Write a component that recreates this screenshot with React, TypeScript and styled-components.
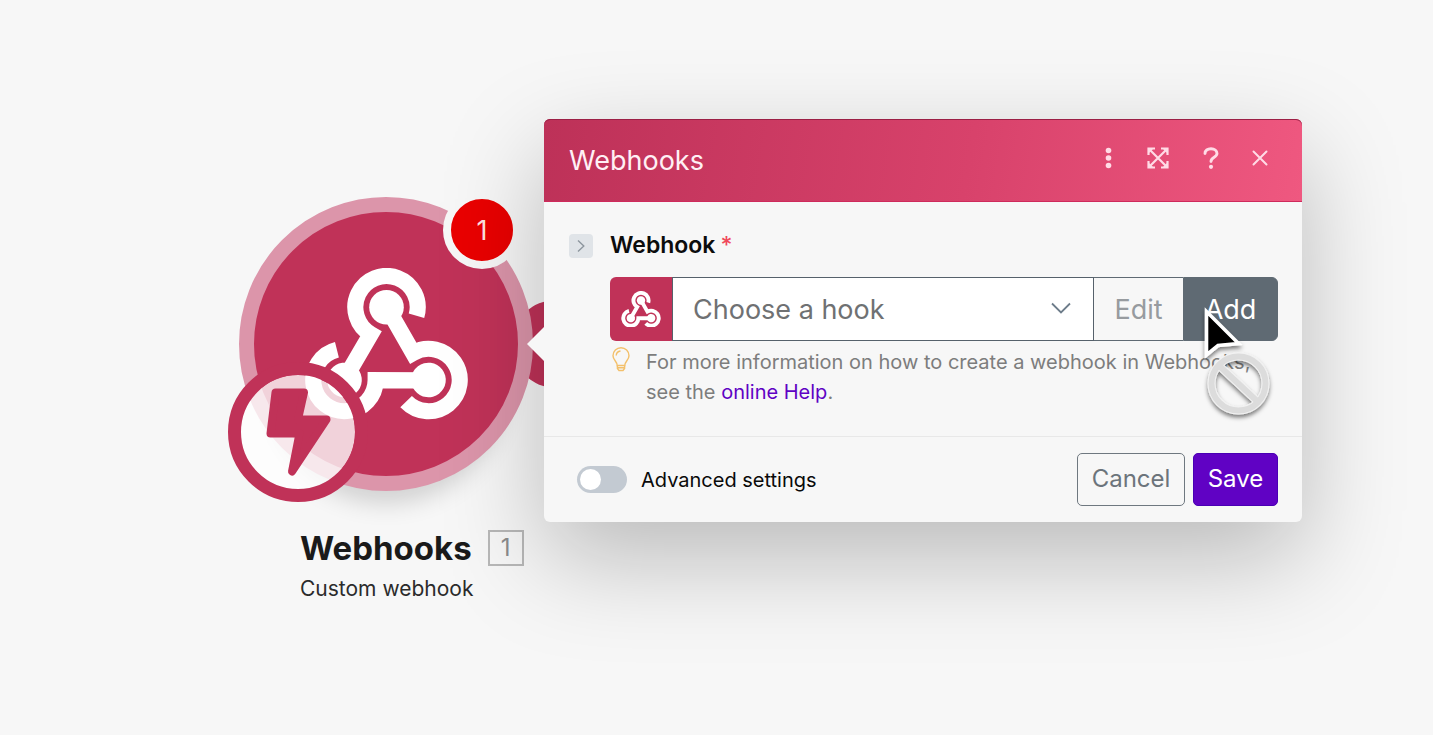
import React from "react";
import styled, { createGlobalStyle } from "styled-components";

const crimson = "#c03258";
const slate = "#5f6a73";
const surface = "#f7f7f7";

const GlobalStyle = createGlobalStyle`
  *, *::before, *::after { box-sizing: border-box; }
  body {
    margin: 0;
    background: ${surface};
    font-family: Inter, "Liberation Sans", sans-serif;
    color: #111;
  }
  button, select, input { font: inherit; margin: 0; }
`;

const Canvas = styled.main`
  position: relative;
  min-height: 100vh;
  overflow: hidden;
`;

/* Scenario node */
const Node = styled.section`
  position: absolute;
  left: 239px;
  top: 197px;
  width: 294px;
`;

const NodeDisc = styled.div`
  position: relative;
  display: flex;
  align-items: center;
  justify-content: center;
  height: 294px;
  border-radius: 50%;
  border: 15px solid #dc95aa;
  background: ${crimson};
  box-shadow: 0 40px 24px -28px rgba(0, 0, 0, 0.16);
`;

const Connector = styled.div`
  position: absolute;
  left: 512px;
  top: 300px;
  width: 88px;
  height: 88px;
  border-radius: 50%;
  background: ${crimson};
`;

const ErrorBadge = styled.span`
  position: absolute;
  right: -3px;
  top: -21px;
  display: flex;
  align-items: center;
  justify-content: center;
  width: 78px;
  height: 78px;
  border: 8px solid ${surface};
  border-radius: 50%;
  background: #ea0000;
  color: #ffe3e3;
  font-size: 27px;
`;

const TriggerBadge = styled.span`
  position: absolute;
  left: -26px;
  bottom: -26px;
  display: flex;
  align-items: center;
  justify-content: center;
  width: 140px;
  height: 140px;
  border: 13px solid ${crimson};
  border-radius: 50%;
  background: rgba(255, 255, 255, 0.78);
  background-clip: padding-box;
`;

const NodeCaption = styled.div`
  padding: 36px 0 0 61px;
  white-space: nowrap;
`;

const NodeTitle = styled.h2`
  display: flex;
  align-items: center;
  gap: 16px;
  margin: 0;
  font-size: 33px;
  line-height: 42px;
  font-weight: 700;
  color: #1a1a1a;
`;

const NodeIndex = styled.span`
  width: 36px;
  height: 36px;
  border: 2px solid #b8b8b8;
  font-size: 24px;
  line-height: 32px;
  font-weight: 400;
  text-align: center;
  color: #8c8c8c;
`;

const NodeSubtitle = styled.p`
  margin: 6px 0 0;
  font-size: 21px;
  line-height: 28px;
  color: #2b2b2b;
`;

/* Settings window */
const Dialog = styled.section`
  position: absolute;
  left: 544px;
  right: 131px;
  top: 119px;
  border-radius: 6px;
  background: ${surface};
  box-shadow: 0 36px 100px rgba(0, 0, 0, 0.25);

  &::before {
    content: "";
    position: absolute;
    left: -17px;
    top: 208px;
    border: solid transparent;
    border-width: 17px 17px 17px 0;
    border-right-color: ${surface};
  }
`;

const DialogHeader = styled.header`
  display: flex;
  align-items: center;
  justify-content: space-between;
  height: 83px;
  padding: 0 32px 4px 25px;
  border-radius: 6px 6px 0 0;
  background: linear-gradient(100deg, #bd3158 0%, #d8426b 56%, #ef5880 100%);
  box-shadow: inset 0 1px 0 #9c1f45, inset 0 -1px 0 #cf2a5c;
`;

const DialogTitle = styled.h1`
  margin: 4px 0 0;
  font-size: 27px;
  line-height: 36px;
  font-weight: 400;
  color: #fff0f5;
`;

const HeaderActions = styled.div`
  display: flex;
  gap: 30px;
`;

const IconButton = styled.button<{ $width: number }>`
  display: flex;
  align-items: center;
  justify-content: center;
  width: ${(p) => p.$width}px;
  height: 28px;
  padding: 0 0 2px;
  border: 0;
  background: none;
  color: #ffdbe6;
  cursor: pointer;
`;

const DialogBody = styled.div`
  display: grid;
  grid-template-columns: 24px 1fr;
  column-gap: 17px;
  padding: 28px 24px 29px 25px;
`;

const ExpandButton = styled.button`
  display: flex;
  align-items: center;
  justify-content: center;
  width: 24px;
  height: 24px;
  margin-top: 4px;
  padding: 0;
  border: 0;
  border-radius: 4px;
  background: #e0e4e8;
  color: #8d969e;
`;

const FieldLabel = styled.label`
  display: block;
  font-size: 23px;
  line-height: 30px;
  font-weight: 600;
  color: #0c0c0c;
`;

const Required = styled.span`
  margin-left: 5px;
  font-weight: 500;
  color: #f0485a;
`;

const InputGroup = styled.div`
  display: flex;
  height: 64px;
  margin-top: 17px;
`;

const GroupIcon = styled.span`
  display: flex;
  align-items: center;
  justify-content: center;
  width: 62px;
  border-radius: 6px 0 0 6px;
  background: ${crimson};
`;

const SelectWrap = styled.div`
  position: relative;
  flex: 1;
  color: #6d7c8a;

  svg {
    position: absolute;
    right: 23px;
    top: 25px;
    pointer-events: none;
  }
`;

const HookSelect = styled.select`
  appearance: none;
  width: 100%;
  height: 100%;
  padding: 0 56px 0 20px;
  border: 1px solid #56616b;
  border-radius: 0;
  background: #fff;
  color: #6f7173;
  font-size: 27px;
`;

const GroupButton = styled.button<{ $solid?: boolean }>`
  width: ${(p) => (p.$solid ? 95 : 89)}px;
  padding: 0;
  border: 1px solid ${slate};
  border-width: ${(p) => (p.$solid ? "1px" : "1px 0")};
  border-radius: ${(p) => (p.$solid ? "0 6px 6px 0" : "0")};
  background: ${(p) => (p.$solid ? slate : surface)};
  color: ${(p) => (p.$solid ? "#fff" : "#979b9f")};
  font-size: 27px;
`;

const Hint = styled.div`
  display: flex;
  gap: 15px;
  margin-top: 6px;
  padding-left: 1px;
`;

const HintText = styled.p`
  margin: 0;
  font-size: 20px;
  line-height: 30px;
  color: #7d7d7d;
  white-space: nowrap;
`;

const HelpLink = styled.a`
  color: #6002c4;
  text-decoration: none;
`;

const DialogFooter = styled.footer`
  display: flex;
  align-items: center;
  gap: 8px;
  height: 86px;
  padding: 0 24px 0 33px;
  border-top: 1px solid #e8e8e8;
`;

const ToggleLabel = styled.label`
  display: flex;
  align-items: center;
  gap: 14px;
  margin-right: auto;
  font-size: 20px;
  line-height: 28px;
  color: #0a0a0a;
`;

const Toggle = styled.input`
  appearance: none;
  display: flex;
  align-items: center;
  width: 50px;
  height: 27px;
  padding: 0 3px;
  border-radius: 14px;
  background: #c3cad2;

  &::before {
    content: "";
    width: 21px;
    height: 21px;
    border-radius: 50%;
    background: #fff;
  }
  &:checked {
    justify-content: flex-end;
    background: #6002c4;
  }
`;

const FooterButton = styled.button<{ $primary?: boolean }>`
  width: ${(p) => (p.$primary ? 85 : 108)}px;
  height: 53px;
  padding: 0 0 2px;
  border: 1px solid ${(p) => (p.$primary ? "#4a00b4" : "#6f7880")};
  border-radius: 5px;
  background: ${(p) => (p.$primary ? "#6002c4" : surface)};
  color: ${(p) => (p.$primary ? "#fff" : "#6c747b")};
  font-size: 24px;
`;

const Pointer = styled.svg`
  position: absolute;
  right: 26px;
  top: 180px;
  width: 82px;
  height: 124px;
  pointer-events: none;
`;

function WebhookLogo({ width }: { width: number }) {
  return (
    <svg width={width} viewBox="304 269 164 151" aria-hidden="true">
      {[0, 120, 240].map((angle) => (
        <g key={angle} transform={`rotate(${angle} 386 356.2)`}>
          <path
            d="M415.800 316.500A31 31 0 1 0 370.400 334.700L343.700 380.500"
            fill="none"
            stroke="#fff"
            strokeWidth="16"
          />
          <circle cx="386" cy="308" r="17.200" fill="#fff" />
        </g>
      ))}
    </svg>
  );
}

export default function App() {
  return (
    <>
      <GlobalStyle />
      <Canvas>
        <Connector />
        <Node>
          <NodeDisc>
            <WebhookLogo width={165} />
            <TriggerBadge>
              <svg width="68" height="92" viewBox="264 385 68 92" aria-hidden="true">
                <path
                  d="M275.500 391.500H304L298 418.500H326.500L292 470.500L299.500 432.500H270.500Z"
                  fill={crimson}
                  stroke={crimson}
                  strokeWidth="8"
                  strokeLinejoin="round"
                />
              </svg>
            </TriggerBadge>
            <ErrorBadge>1</ErrorBadge>
          </NodeDisc>
          <NodeCaption>
            <NodeTitle>
              Webhooks <NodeIndex>1</NodeIndex>
            </NodeTitle>
            <NodeSubtitle>Custom webhook</NodeSubtitle>
          </NodeCaption>
        </Node>

        <Dialog aria-labelledby="dialog-title">
          <DialogHeader>
            <DialogTitle id="dialog-title">Webhooks</DialogTitle>
            <HeaderActions>
              <IconButton $width={8} aria-label="More">
                <svg width="8" height="22" viewBox="0 0 8 22" fill="currentColor">
                  <circle cx="3.500" cy="3.500" r="2.800" />
                  <circle cx="3.500" cy="11" r="2.800" />
                  <circle cx="3.500" cy="18.500" r="2.800" />
                </svg>
              </IconButton>
              <IconButton $width={29} aria-label="Expand">
                <svg width="22" height="22" viewBox="0 0 22 22" fill="none" stroke="currentColor" strokeWidth="2.200">
                  <path d="M2.500 2.500L19.500 19.500M19.500 2.500L2.500 19.500" />
                  <path d="M1.500 8V1.500H8M14 1.500H20.500V8M20.500 14V20.500H14M8 20.500H1.500V14" />
                  <path d="M2 2H6L2 6ZM20 2H16L20 6ZM20 20V16L16 20ZM2 20V16L6 20Z" fill="currentColor" stroke="none" />
                </svg>
              </IconButton>
              <IconButton $width={18} aria-label="Help">
                <svg width="16" height="22" viewBox="0 0 16 22" fill="none" stroke="currentColor" strokeWidth="2.900">
                  <path d="M2 6.500C2 3.500 4.500 1.800 8 1.800S14 3.600 14 6.600C14 10.500 8 10 8 14.500" strokeLinecap="round" />
                  <circle cx="8" cy="19.800" r="2.100" fill="currentColor" stroke="none" />
                </svg>
              </IconButton>
              <IconButton $width={20} aria-label="Close">
                <svg width="16" height="16" viewBox="0 0 16 16" fill="none" stroke="currentColor" strokeWidth="2" strokeLinecap="round">
                  <path d="M1.500 1.500L14.500 14.500M14.500 1.500L1.500 14.500" />
                </svg>
              </IconButton>
            </HeaderActions>
          </DialogHeader>

          <DialogBody>
            <ExpandButton aria-label="Toggle field options">
              <svg width="8" height="14" viewBox="0 0 8 14" fill="none" stroke="currentColor" strokeWidth="1.400">
                <path d="M1 1.500L6.800 7L1 12.500" />
              </svg>
            </ExpandButton>
            <div>
              <FieldLabel htmlFor="hook">
                Webhook<Required>*</Required>
              </FieldLabel>
              <InputGroup>
                <GroupIcon>
                  <WebhookLogo width={40} />
                </GroupIcon>
                <SelectWrap>
                  <HookSelect id="hook">
                    <option>Choose a hook</option>
                  </HookSelect>
                  <svg width="20" height="13" viewBox="0 0 20 13" fill="none" stroke="currentColor" strokeWidth="1.800">
                    <path d="M1 1.500L10 10.500L19 1.500" />
                  </svg>
                </SelectWrap>
                <GroupButton>Edit</GroupButton>
                <GroupButton $solid>Add</GroupButton>
              </InputGroup>
              <Hint>
                <svg width="20" height="25" viewBox="0 0 20 25" fill="none" stroke="#f3c06b" strokeWidth="1.400" aria-hidden="true">
                  <path d="M6.200 18.500C6.200 14.500 2 13 2 8.700A8 8 0 0 1 18 8.700C18 13 13.800 14.500 13.800 18.500Z" />
                  <path d="M6.400 18.500V21.500L8 23.500H12L13.600 21.500V18.500M6.400 20.800H13.600M5.200 8.500A5 5 0 0 1 9.500 4" />
                </svg>
                <HintText>
                  For more information on how to create a webhook in Webhooks,
                  <br />
                  see the <HelpLink href="#help">online Help</HelpLink>.
                </HintText>
              </Hint>
            </div>
          </DialogBody>

          <DialogFooter>
            <ToggleLabel>
              <Toggle type="checkbox" role="switch" />
              Advanced settings
            </ToggleLabel>
            <FooterButton>Cancel</FooterButton>
            <FooterButton $primary>Save</FooterButton>
          </DialogFooter>

          <Pointer viewBox="1194 299 82 124" aria-hidden="true">
            <defs>
              <filter id="drop" x="-30%" y="-30%" width="160%" height="160%">
                <feDropShadow dx="0" dy="3" stdDeviation="2.200" floodOpacity="0.5" />
              </filter>
            </defs>
            <path
              d="M1206.500 311.500V355L1218 345.500L1238.500 343.500Z"
              fill="#000"
              stroke="#fff"
              strokeWidth="3.600"
              filter="url(#drop)"
            />
            <g fill="none" filter="url(#drop)">
              <g stroke="#f2f2f2" strokeWidth="8">
                <circle cx="1238.500" cy="383.500" r="27" />
                <path d="M1220 366.500L1257 401" />
              </g>
              <g stroke="#dcdcdc" strokeWidth="6">
                <circle cx="1238.500" cy="383.500" r="27" />
                <path d="M1220 366.500L1257 401" />
              </g>
            </g>
          </Pointer>
        </Dialog>
      </Canvas>
    </>
  );
}
